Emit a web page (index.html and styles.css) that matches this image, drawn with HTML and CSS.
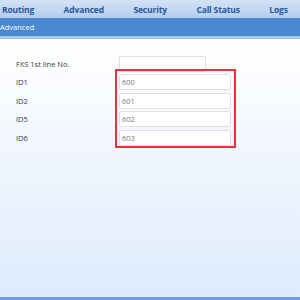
FILE: index.html
```html
<!DOCTYPE html>
<html lang="en">
<head>
<meta charset="UTF-8">
<title>Advanced</title>
<link rel="stylesheet" href="styles.css">
</head>
<body>
    <div class="nav">
        <span class="nav-item">Routing</span>
        <span class="nav-item">Advanced</span>
        <span class="nav-item">Security</span>
        <span class="nav-item">Call Status</span>
        <span class="nav-item">Logs</span>
    </div>
    <div class="crumb">Advanced</div>

    <div class="content">
        <div class="form">
            <div class="row">
                <label class="label">FXS 1st line No.</label>
                <input class="input input-short" type="text" value="">
            </div>
            <div class="row">
                <label class="label">ID1</label>
                <input class="input" type="text" value="600">
            </div>
            <div class="row">
                <label class="label">ID2</label>
                <input class="input" type="text" value="601">
            </div>
            <div class="row">
                <label class="label">ID5</label>
                <input class="input" type="text" value="602">
            </div>
            <div class="row">
                <label class="label">ID6</label>
                <input class="input" type="text" value="603">
            </div>
            <!-- annotation box -->
            <div class="highlight"></div>
        </div>
    </div>
</body>
</html>
```

FILE: styles.css
```css
html, body {
    margin: 0;
    padding: 0;
    height: 100%;
}

body {
    font-family: "Open Sans", "DejaVu Sans", sans-serif;
    display: flex;
    flex-direction: column;
    color: #333;
}

.nav {
    height: 18px;
    display: flex;
    align-items: center;
    gap: 29.5px;
    padding-left: 2px;
    background: linear-gradient(#d3e3f6, #b3cdee);
    white-space: nowrap;
    overflow: hidden;
}

.nav-item {
    flex-shrink: 0;
    font-size: 8.5px;
    font-weight: bold;
    color: #25579a;
    letter-spacing: -0.15px;
}

.crumb {
    height: 18px;
    line-height: 18px;
    background-color: #4a89cf;
    color: #fff;
    font-size: 7.5px;
    border-bottom: 3px solid #a9c7ee;
}

.content {
    flex: 1;
    background: linear-gradient(#ffffff, #deebfd);
    border-bottom: 3px solid #6d9fe0;
}

.form {
    position: relative;
    padding: 15.5px 0 0 16px;
}

.row {
    display: flex;
    align-items: center;
    height: 18.5px;
}

.label {
    width: 103px;
    font-size: 7.5px;
    color: #3a3a3a;
}

.input {
    box-sizing: border-box;
    width: 112px;
    height: 16px;
    padding: 0 2px;
    border: 1px solid #dcdfe4;
    border-radius: 2px;
    background: #fff;
    font-family: inherit;
    font-size: 7.5px;
    color: #7a7a7a;
    outline: none;
}

.input-short {
    width: 87px;
}

.highlight {
    position: absolute;
    left: 115px;
    top: 30px;
    width: 117px;
    height: 75px;
    border: 2px solid #e6323d;
}
```
